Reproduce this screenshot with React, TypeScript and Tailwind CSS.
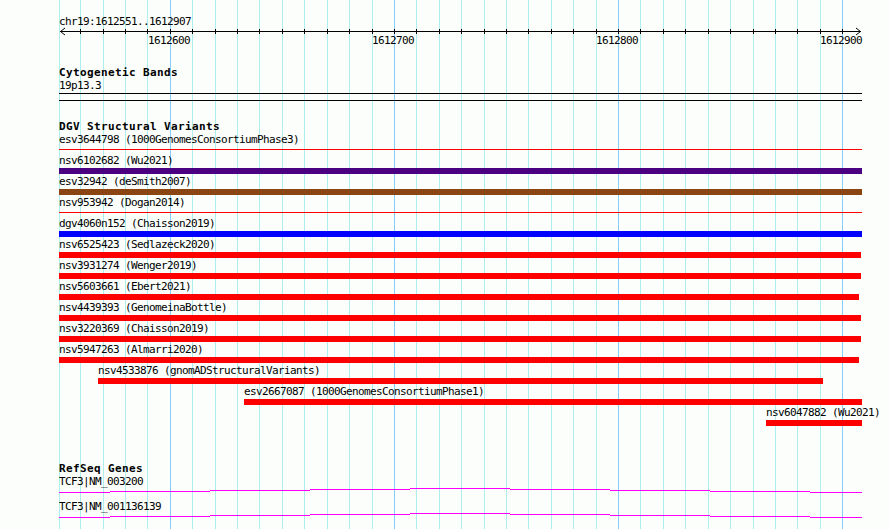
import React from "react";

type Variant = {
  label: string;
  start: number;
  end: number;
  color: string;
  thin?: boolean;
};

const TRACK_LEFT = 59;
const TRACK_WIDTH = 803;

// grid line every 10bp, x in page pixels
const gridX = (k: number) => (k === 0 ? 59 : Math.round(57.8 + 22.41 * k));

const variants: Variant[] = [
  { label: "esv3644798 (1000GenomesConsortiumPhase3)", start: 59, end: 862, color: "bg-[#ff0000]", thin: true },
  { label: "nsv6102682 (Wu2021)", start: 59, end: 862, color: "bg-[#4b0082]" },
  { label: "esv32942 (deSmith2007)", start: 59, end: 862, color: "bg-[#8b4513]" },
  { label: "nsv953942 (Dogan2014)", start: 59, end: 862, color: "bg-[#ff0000]", thin: true },
  { label: "dgv4060n152 (Chaisson2019)", start: 59, end: 862, color: "bg-[#0000ff]" },
  { label: "nsv6525423 (Sedlazeck2020)", start: 59, end: 861, color: "bg-[#ff0000]" },
  { label: "nsv3931274 (Wenger2019)", start: 59, end: 861, color: "bg-[#ff0000]" },
  { label: "nsv5603661 (Ebert2021)", start: 59, end: 859, color: "bg-[#ff0000]" },
  { label: "nsv4439393 (GenomeinaBottle)", start: 59, end: 861, color: "bg-[#ff0000]" },
  { label: "nsv3220369 (Chaisson2019)", start: 59, end: 861, color: "bg-[#ff0000]" },
  { label: "nsv5947263 (Almarri2020)", start: 59, end: 859, color: "bg-[#ff0000]" },
  { label: "nsv4533876 (gnomADStructuralVariants)", start: 98, end: 823, color: "bg-[#ff0000]" },
  { label: "esv2667087 (1000GenomesConsortiumPhase1)", start: 244, end: 862, color: "bg-[#ff0000]" },
  { label: "nsv6047882 (Wu2021)", start: 766, end: 862, color: "bg-[#ff0000]" },
];

const majorTicks = [
  { k: 5, text: "1612600" },
  { k: 15, text: "1612700" },
  { k: 25, text: "1612800" },
  { k: 35, text: "1612900" },
];

// intron line sags slightly across the view
const geneSegments = [
  [59, 110, 5],
  [110, 210, 4],
  [210, 310, 3],
  [310, 410, 2],
  [410, 510, 1],
  [510, 610, 2],
  [610, 710, 3],
  [710, 810, 4],
  [810, 862, 5],
];

const Grid = () => {
  const lines = [];
  for (let k = 0; k <= 35; k++) {
    lines.push(
      <rect
        key={k}
        x={gridX(k)}
        y={0}
        width={1}
        height={529}
        fill={k % 10 === 5 ? "#87cefa" : "#afeeee"}
      />
    );
  }
  return (
    <svg className="absolute inset-0 pointer-events-none" width={890} height={529} shapeRendering="crispEdges">
      {lines}
    </svg>
  );
};

const Ruler = () => {
  const ticks = [];
  for (let k = 1; k <= 35; k++) {
    ticks.push(<rect key={k} x={gridX(k) - TRACK_LEFT} y={2} width={1} height={5} fill="#000" />);
  }
  return (
    <>
      <svg className="block overflow-visible" width={TRACK_WIDTH} height={8}>
        <g shapeRendering="crispEdges">
          <rect x={1} y={4} width={801} height={1} fill="#000" />
          {ticks}
        </g>
        <polyline points="6,1 1.5,4.5 6,8" fill="none" stroke="#000" strokeWidth={1} />
        <polyline points="797,1 801.5,4.5 797,8" fill="none" stroke="#000" strokeWidth={1} />
      </svg>
      <div className="relative h-[11px] leading-[11px]">
        {majorTicks.map((t) => (
          <span
            key={t.k}
            className="absolute top-0"
            style={{ left: gridX(t.k) - TRACK_LEFT - 22 }}
          >
            {t.text}
          </span>
        ))}
      </div>
    </>
  );
};

const VariantRow = ({ v }: { v: Variant }) => (
  <div className="flex flex-col pb-[4px]">
    <div className="h-[11px] leading-[8px] whitespace-nowrap" style={{ paddingLeft: v.start - TRACK_LEFT }}>
      {v.label}
    </div>
    <div className="h-[6px]">
      <div
        className={`${v.color} ${v.thin ? "h-px mt-[2px]" : "h-[6px]"}`}
        style={{ marginLeft: v.start - TRACK_LEFT, width: v.end - v.start }}
      />
    </div>
  </div>
);

const GeneLine = () => (
  <svg className="block" width={TRACK_WIDTH} height={6} shapeRendering="crispEdges">
    {geneSegments.map(([a, b, y]) => (
      <rect key={a} x={a - TRACK_LEFT} y={y} width={b - a} height={1} fill="#ff00ff" />
    ))}
  </svg>
);

const Heading = ({ children, className = "" }: { children: React.ReactNode; className?: string }) => (
  <div className={`h-[13px] leading-[12px] text-[11px] tracking-[0.38px] font-bold whitespace-nowrap ${className}`}>
    {children}
  </div>
);

const App = () => {
  return (
    <div className="relative w-[890px] h-[529px] overflow-hidden bg-[#fbfefb] text-black text-[11px] tracking-[-0.62px] font-['DejaVu_Sans_Mono','Liberation_Mono',monospace]">
      <Grid />

      <div className="relative ml-[59px] w-[803px]">
        <div className="pt-[16px] h-[27px] leading-[11px]">chr19:1612551..1612907</div>
        <Ruler />

        <Heading className="mt-[21px]">Cytogenetic Bands</Heading>
        <div className="h-[11px] leading-[11px]">19p13.3</div>
        <div className="mt-[2px] h-px bg-black" />
        <div className="mt-[6px] h-px bg-black" />

        <Heading className="mt-[20px]">DGV Structural Variants</Heading>
        <div className="mt-[2px]">
          {variants.map((v) => (
            <VariantRow key={v.label} v={v} />
          ))}
        </div>

        <Heading className="mt-[33px]">RefSeq Genes</Heading>
        <div className="h-[11px] leading-[11px]">TCF3|NM_003200</div>
        <GeneLine />
        <div className="mt-[8px] h-[11px] leading-[11px]">TCF3|NM_001136139</div>
        <GeneLine />
      </div>
    </div>
  );
};

export default App;
